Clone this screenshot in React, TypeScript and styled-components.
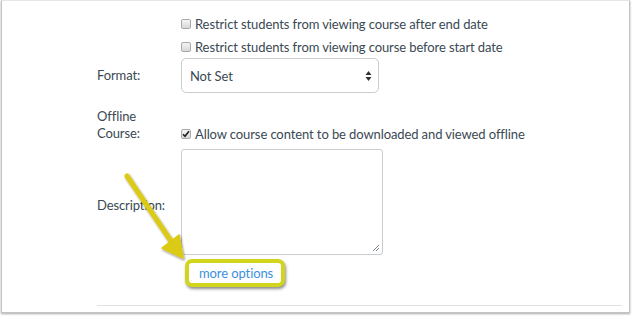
import React from "react";
import styled, { createGlobalStyle } from "styled-components";

const Global = createGlobalStyle`
  html, body { margin: 0; padding: 0; background: #ffffff; }
  body { font-family: Lato, "Open Sans", "Liberation Sans", sans-serif; }
`;

const Outer = styled.div`
  width: 632px;
  height: 316px;
  box-sizing: border-box;
  padding: 0 2px 3px 1px;
  background: #ffffff;
`;

const Panel = styled.div`
  position: relative;
  height: 100%;
  box-sizing: border-box;
  border: 1px solid #c4c4c4;
  border-top-color: #e6e6e6;
  box-shadow: 0 1px 2px rgba(0, 0, 0, 0.35);
  padding-top: 11px;
  color: #3a4953;
  font-size: 13px;
  letter-spacing: -0.1px;
  overflow: hidden;
`;

const FormRow = styled.div<{ $top?: number; $align?: string }>`
  display: grid;
  grid-template-columns: 84px auto;
  margin-left: 95px;
  margin-top: ${(p) => p.$top ?? 0}px;
  align-items: ${(p) => p.$align ?? "center"};
`;

const Label = styled.div`
  line-height: 17px;
`;

const CheckLine = styled.label<{ $h?: number }>`
  display: flex;
  align-items: center;
  gap: 4px;
  height: ${(p) => p.$h ?? 24}px;
  white-space: nowrap;
`;

const Box = styled.span`
  width: 10px;
  height: 10px;
  border: 1px solid #a9a9a9;
  border-radius: 2px;
  background: linear-gradient(#f4f4f4, #d8d8d8);
  box-sizing: border-box;
  display: inline-flex;
  align-items: center;
  justify-content: center;
  flex: none;
`;

const Select = styled.div`
  width: 198px;
  height: 35px;
  box-sizing: border-box;
  border: 1px solid #c7cdd1;
  border-radius: 5px;
  display: flex;
  align-items: center;
  justify-content: space-between;
  padding: 0 6px 0 8px;
  background: #fff;
`;

const TextArea = styled.div`
  position: relative;
  width: 202px;
  height: 106px;
  box-sizing: border-box;
  border: 1px solid #c7cdd1;
  border-radius: 3px;
  background: #fff;
`;

const Grip = styled.svg`
  position: absolute;
  right: 2px;
  bottom: 2px;
`;

const DescLabel = styled(Label)`
  padding-top: 6px;
`;

const Highlight = styled.div`
  margin: 4px 0 0 4px;
  width: 100px;
  height: 28px;
  box-sizing: border-box;
  border: 4px solid #d3d51c;
  border-radius: 7px;
  box-shadow: 1px 2px 3px rgba(0, 0, 0, 0.45);
  display: flex;
  align-items: center;
  padding-left: 10px;
  background: #fff;
`;

const Link = styled.span`
  color: #3b8fdc;
  line-height: 16px;
`;

const Rule = styled.div`
  margin: 18px 7px 0 95px;
  height: 1px;
  background: #e2e2e2;
`;

const ArrowSvg = styled.svg`
  position: absolute;
  left: 0;
  top: 0;
  pointer-events: none;
`;

const Check = () => (
  <svg width="8" height="8" viewBox="0 0 8 8">
    <path d="M1 4.2 L3 6.3 L7 1.2" fill="none" stroke="#222" strokeWidth="1.6" />
  </svg>
);

export default function App() {
  return (
    <>
      <Global />
      <Outer>
        <Panel>
          <FormRow>
            <span />
            <div>
              <CheckLine>
                <Box />
                Restrict students from viewing course after end date
              </CheckLine>
              <CheckLine $h={21}>
                <Box />
                Restrict students from viewing course before start date
              </CheckLine>
            </div>
          </FormRow>
          <FormRow $top={1}>
            <Label>Format:</Label>
            <Select>
              <span>Not Set</span>
              <svg width="7" height="12" viewBox="0 0 7 12">
                <path d="M0.5 5 L3.5 1 L6.5 5 Z M0.5 7 L3.5 11 L6.5 7 Z" fill="#333" />
              </svg>
            </Select>
          </FormRow>
          <FormRow $top={15} $align="end">
            <Label>
              Offline
              <br />
              Course:
            </Label>
            <CheckLine $h={17}>
              <Box>
                <Check />
              </Box>
              Allow course content to be downloaded and viewed offline
            </CheckLine>
          </FormRow>
          <FormRow $top={7}>
            <DescLabel>Description:</DescLabel>
            <TextArea>
              <Grip width="8" height="8" viewBox="0 0 8 8">
                <path d="M1 7 L7 1 M4 7 L7 4" stroke="#888" strokeWidth="1" />
              </Grip>
            </TextArea>
          </FormRow>
          <FormRow>
            <span />
            <Highlight>
              <Link>more options</Link>
            </Highlight>
          </FormRow>
          <Rule />
          <ArrowSvg width="629" height="313" viewBox="0 0 629 313">
            <defs>
              <filter id="sh" x="-20%" y="-20%" width="140%" height="140%">
                <feDropShadow dx="1" dy="1.5" stdDeviation="1.2" floodColor="#000" floodOpacity="0.45" />
              </filter>
            </defs>
            <g filter="url(#sh)">
              <line x1="125" y1="175" x2="169" y2="240" stroke="#dccb12" strokeWidth="5" strokeLinecap="round" />
              <path d="M160 247 L177 234 L181 257 Z" fill="#dccb12" stroke="#dccb12" strokeWidth="1.5" strokeLinejoin="round" />
            </g>
          </ArrowSvg>
        </Panel>
      </Outer>
    </>
  );
}
